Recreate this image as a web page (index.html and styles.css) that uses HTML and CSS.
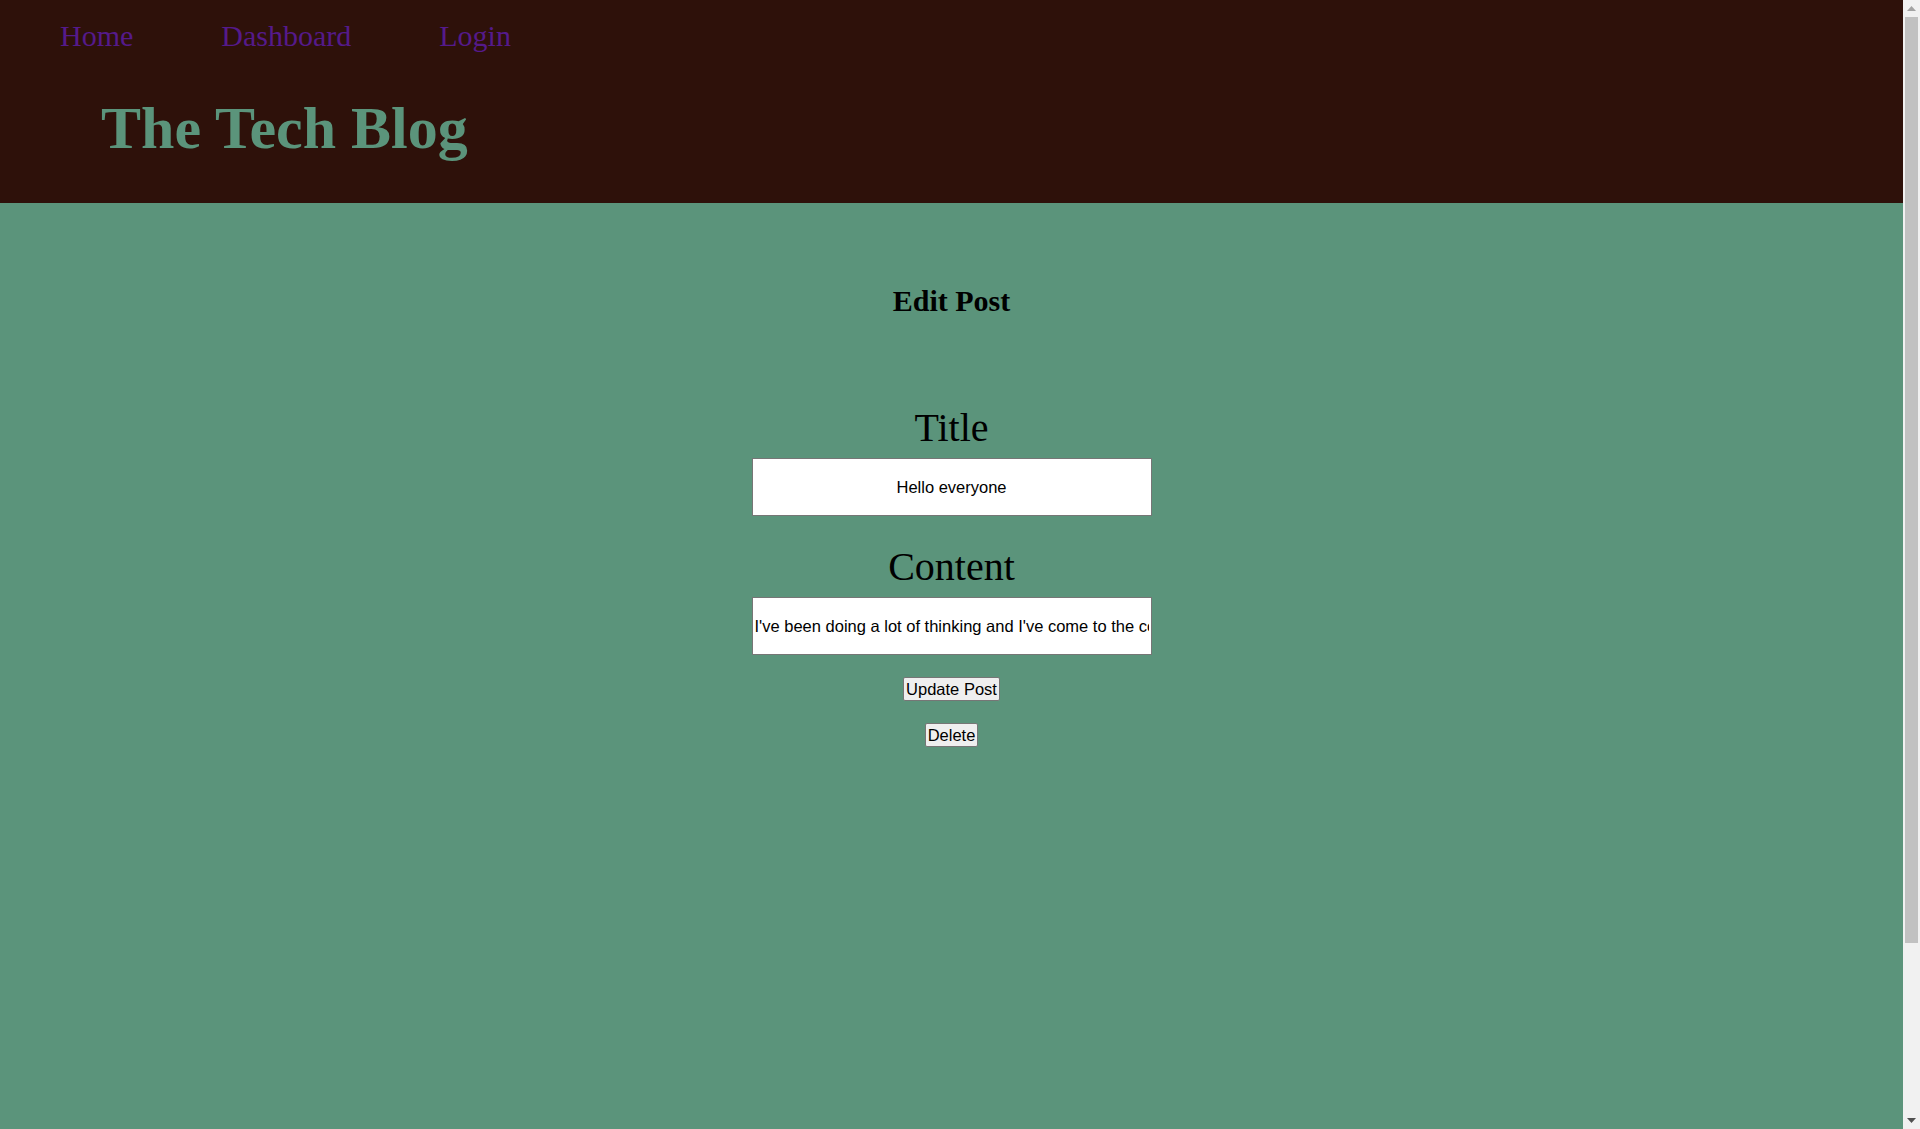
FILE: index.html
```html
<!DOCTYPE html>
<html lang="en">
<head>
<meta charset="utf-8">
<title>The Tech Blog</title>
<link rel="stylesheet" href="styles.css">
</head>
<body>
<header class="site-header">
  <nav class="nav">
    <a class="nav-link" href="#">Home</a>
    <a class="nav-link" href="#">Dashboard</a>
    <a class="nav-link" href="#">Login</a>
  </nav>
  <h1 class="brand">The Tech Blog</h1>
</header>
<main class="main">
  <h2 class="page-title">Edit Post</h2>
  <form class="edit-form">
    <label class="field-label" for="title">Title</label>
    <input class="field-input" id="title" type="text" value="Hello everyone">
    <label class="field-label field-label-second" for="content">Content</label>
    <input class="field-input" id="content" type="text" value="I've been doing a lot of thinking and I've come to the conclusion that tech is great.">
    <button class="btn" type="button">Update Post</button>
    <button class="btn" type="button">Delete</button>
  </form>
</main>
<div class="scrollbar" aria-hidden="true">
  <div class="sb-btn">
    <svg width="9" height="5" viewBox="0 0 9 5"><polygon points="4.5,0 9,5 0,5" fill="#a3a3a3"/></svg>
  </div>
  <div class="sb-track">
    <div class="sb-thumb"></div>
  </div>
  <div class="sb-btn">
    <svg width="9" height="5" viewBox="0 0 9 5"><polygon points="0,0 9,0 4.5,5" fill="#505050"/></svg>
  </div>
</div>
</body>
</html>
```

FILE: styles.css
```css
html, body {
  margin: 0;
  padding: 0;
}

body {
  background: #5b947b;
  font-family: "Liberation Serif", "Times New Roman", serif;
  color: #000;
  min-height: 1335px;
  padding-right: 17px;
}

.site-header {
  background: #2e110a;
  height: 203px;
  box-sizing: border-box;
  padding-top: 19px;
}

.nav {
  display: flex;
  gap: 88px;
  padding-left: 60px;
}

.nav-link {
  font-size: 30px;
  line-height: 34px;
  color: #551a8b;
  text-decoration: none;
}

.brand {
  margin: 41px 0 0 101px;
  font-size: 60px;
  line-height: 69px;
  font-weight: bold;
  color: #5b947b;
}

.main {
  display: flex;
  flex-direction: column;
  align-items: center;
  padding-top: 81px;
}

.page-title {
  margin: 0;
  font-size: 30px;
  line-height: 34px;
  font-weight: bold;
}

.edit-form {
  display: flex;
  flex-direction: column;
  align-items: center;
  margin-top: 87px;
}

.field-label {
  font-size: 40px;
  line-height: 46px;
  margin-bottom: 7px;
}

.field-label-second {
  margin-top: 28px;
}

.field-input {
  width: 400px;
  height: 58px;
  box-sizing: border-box;
  border: 1px solid #767676;
  background: #fff;
  padding: 1px 2px;
  font-family: "Liberation Sans", Arial, sans-serif;
  font-size: 16.5px;
  text-align: center;
  color: #000;
}

.btn {
  margin-top: 22px;
  font-family: "Liberation Sans", Arial, sans-serif;
  font-size: 16.5px;
  line-height: 19px;
  height: 24px;
  box-sizing: border-box;
  padding: 1px 2px;
  background: #efefef;
  border: 1px solid #767676;
  border-radius: 2px;
  color: #000;
}

/* simulated classic browser scrollbar */
.scrollbar {
  position: fixed;
  top: 0;
  right: 0;
  bottom: 0;
  width: 17px;
  background: #f1f1f1;
  display: flex;
  flex-direction: column;
}

.sb-btn {
  height: 17px;
  flex: 0 0 17px;
  display: flex;
  align-items: center;
  justify-content: center;
}

.sb-track {
  flex: 1;
  padding: 0 2px;
}

.sb-thumb {
  height: 926px;
  background: #c1c1c1;
}
```
